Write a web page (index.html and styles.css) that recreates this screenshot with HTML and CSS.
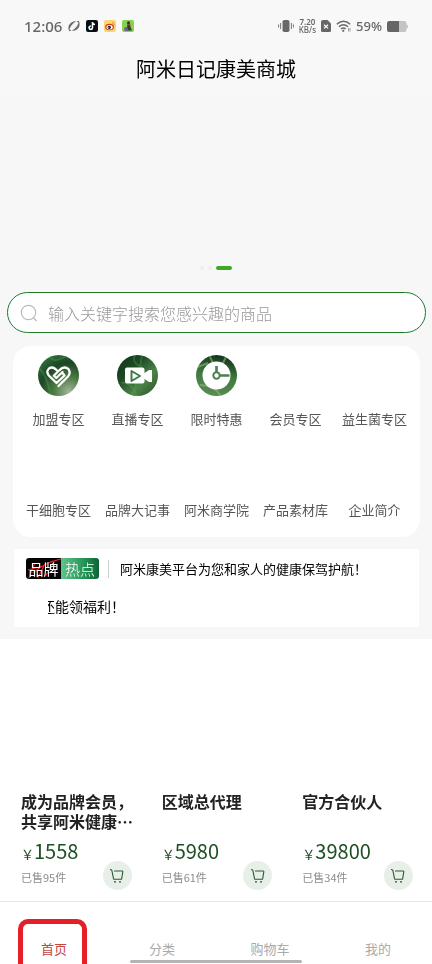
FILE: index.html
```html
<!DOCTYPE html>
<html lang="zh-CN">
<head>
<meta charset="utf-8">
<meta name="viewport" content="width=device-width, initial-scale=1">
<title>阿米日记康美商城</title>
<link rel="stylesheet" href="styles.css">
</head>
<body>
<svg class="defs" width="0" height="0" aria-hidden="true">
  <defs>
    <radialGradient id="leafA" cx="0.75" cy="0.9" r="0.95"><stop offset="0" stop-color="#a3b59c"/><stop offset="0.4" stop-color="#47793f"/><stop offset="0.75" stop-color="#1c4526"/><stop offset="1" stop-color="#2f6a38"/></radialGradient>
    <linearGradient id="leafB" x1="0" y1="0" x2="1" y2="1"><stop offset="0" stop-color="#123019"/><stop offset="0.35" stop-color="#1d4a25"/><stop offset="0.65" stop-color="#4c8447"/><stop offset="1" stop-color="#2a4d2c"/></linearGradient>
    <linearGradient id="leafC" x1="0.6" y1="0" x2="0.4" y2="1"><stop offset="0" stop-color="#11321b"/><stop offset="0.5" stop-color="#3f7a3e"/><stop offset="1" stop-color="#5c8c54"/></linearGradient>
    <clipPath id="disc"><circle cx="20.500" cy="20.500" r="20.500"/></clipPath>
    <symbol id="cart" viewBox="0 0 16 16">
      <path d="M1.500 1.500 2.800 2.200 4.600 11.200H12.600L13.800 3.800Q13.900 3 13 3H5.500" fill="none" stroke="#2d5a35" stroke-width="1.100" stroke-linecap="round" stroke-linejoin="round"/>
      <circle cx="6" cy="13.800" r="0.900" fill="#1d4a26"/><circle cx="11" cy="13.800" r="0.900" fill="#1d4a26"/>
    </symbol>
  </defs>
</svg>

<header class="top">
  <div class="status">
    <div class="status-group">
      <span class="clock">12:06</span>
      <svg class="app" viewBox="0 0 12 12"><path d="M.8 9.800C-1 4.500 4 .8 8.300 1.200 5.500 2.800 3 5 1.800 8.500ZM11.200 2.200C13 7.500 8 11.200 3.700 10.800 6.500 9.200 9 7 10.200 3.500Z" fill="#6e6e6e"/><path d="M.5 8.500 1.200 11.200 3.500 10.800ZM11.500 3.500 10.800 .8 8.500 1.200Z" fill="#6e6e6e"/></svg>
      <svg class="app" viewBox="0 0 12 12"><rect width="12" height="12" rx="2" fill="#0c0c10"/><path d="M6.600 2.200V7.800A1.700 1.700 0 1 1 4.900 6.100M6.600 2.400Q7 4.400 9 4.500" transform="translate(-.4 -.2)" fill="none" stroke="#39d7dc" stroke-width="1.300"/><path d="M6.600 2.200V7.800A1.700 1.700 0 1 1 4.900 6.100M6.600 2.400Q7 4.400 9 4.500" fill="none" stroke="#fff" stroke-width="1.300"/></svg>
      <svg class="app" viewBox="0 0 12 12"><rect width="12" height="12" rx="2" fill="#fbd772"/><ellipse cx="5.600" cy="7" rx="4.400" ry="3.200" fill="#d53a25"/><ellipse cx="5.600" cy="7.200" rx="3.100" ry="2.200" fill="#fff"/><circle cx="5.300" cy="7.300" r="1.600" fill="#111"/><circle cx="4.900" cy="7.600" r=".5" fill="#fff"/><path d="M8 2.200Q10.600 2 10.300 5M8.200 3.600Q9.200 3.600 9 4.800" fill="none" stroke="#ee8b2d" stroke-width=".8"/></svg>
      <svg class="app" viewBox="0 0 12 12"><rect width="12" height="12" rx="2" fill="#86d14e"/><circle cx="6.500" cy="2.700" r="1.500" fill="#2b2b2b"/><path d="M5.500 4H8L8.500 7 10 10.500H3.500L5 7.500Z" fill="#28402c"/><circle cx="4" cy="9" r="2" fill="#7a57a8"/><path d="M5.500 4.500 8.500 5" stroke="#d23f30" stroke-width="1"/></svg>
    </div>
    <div class="status-group">
      <svg class="vibrate" viewBox="0 0 16 12"><rect x="4.500" width="7" height="12" rx="1.800" fill="#686868"/><path d="M2.600 3V9M13.400 3V9M.6 4.500V7.500M15.400 4.500V7.500" stroke="#777" stroke-width="1"/></svg>
      <span class="speed"><b>7.20</b><span>KB/s</span></span>
      <svg class="sim" viewBox="0 0 10 12"><path d="M2 0H6.500L10 3.500V10.500Q10 12 8.500 12H1.500Q0 12 0 10.500V2Q0 0 2 0Z" fill="#666"/><path d="M3 4.800 7 8.400M7 4.800 3 8.400" stroke="#fff" stroke-width="1.200"/></svg>
      <svg class="wifi" viewBox="0 0 15 12"><path d="M.8 4.200Q7.500-1.800 14.200 4.200M3 6.700Q7.500 2.800 12 6.700M5 9Q7.500 7 9.600 9" fill="none" stroke="#696969" stroke-width="1.500"/><circle cx="7.300" cy="10.800" r="1.100" fill="#666"/><path d="M12.500 8V11.500M14 8V11.500" stroke="#888" stroke-width=".8"/></svg>
      <span class="percent">59%</span>
      <svg class="battery" viewBox="0 0 21 11"><path d="M2.500 0H17.500Q19.500 0 19.500 2V3.500L21 4.500V6.500L19.500 7.500V9Q19.500 11 17.500 11H2.500Q0 11 0 8.500V2.500Q0 0 2.500 0Z" fill="#c4c4c4"/><path d="M2.500 0H12V11H2.500Q0 11 0 8.500V2.500Q0 0 2.500 0Z" fill="#666"/></svg>
    </div>
  </div>
  <h1>阿米日记康美商城</h1>
</header>

<main>
  <section class="banner" aria-label="轮播图">
    <div class="dots"><i></i><i></i><i class="on"></i></div>
  </section>

  <form class="search">
    <svg viewBox="0 0 18 18" aria-hidden="true"><circle cx="8.500" cy="8.500" r="7.200" fill="none" stroke="#bbb" stroke-width="1.200"/><path d="M13.500 14 16.500 17" stroke="#bbb" stroke-width="1.400"/></svg>
    <input type="search" aria-label="搜索商品" placeholder="输入关键字搜索您感兴趣的商品">
  </form>

  <nav class="menu" aria-label="专区">
    <a href="#"><span class="pic"><svg viewBox="0 0 41 41"><g clip-path="url(#disc)"><rect width="41" height="41" fill="url(#leafA)"/><path d="M0 13Q8 17 13 41M12 0Q14 10 30 0" stroke="#4d9a50" stroke-width="2" fill="none" opacity=".4"/></g><path d="M18.500 28 10.800 20.500Q7.800 16.500 11 13.500 14.500 11 18 14.500L20 16.500 15.800 20.700 18.200 23 24.500 17M20 16.500 23 13.800Q27 11 30.500 14.200 33 18 30 21.500L20.500 31M18.500 28 26.500 20.500 24.500 18" fill="none" stroke="#fff" stroke-width="2.300" stroke-linecap="round" stroke-linejoin="round"/></svg></span>加盟专区</a>
    <a href="#"><span class="pic"><svg viewBox="0 0 41 41"><g clip-path="url(#disc)"><rect width="41" height="41" fill="url(#leafB)"/><path d="M15 41Q22 25 25 0M4 28Q14 26 20 41M18 0Q14 8 25 12" stroke="#62a65c" stroke-width="2" fill="none" opacity=".3"/></g><path d="M10 12.500H25.500Q27.500 12.500 27.500 14.500V18L32 15H35V27H32L27.500 24V26.500Q27.500 28.500 25.500 28.500H10Q8 28.500 8 26.500V14.500Q8 12.500 10 12.500Z" fill="#fff"/><path d="M14.500 16V26L23 21Z" fill="none" stroke="#3c7a46" stroke-width="2" stroke-linejoin="round"/></svg></span>直播专区</a>
    <a href="#"><span class="pic"><svg viewBox="0 0 41 41"><g clip-path="url(#disc)"><rect width="41" height="41" fill="url(#leafC)"/><path d="M13 0 17 8M31 0 26 10M2 12 12 8M4 30Q18 30 25 41" stroke="#8cba79" stroke-width="2" fill="none" opacity=".6"/></g><circle cx="20.500" cy="20.500" r="14" fill="#fff"/><path d="M20.500 11V17M24 20.500H33.500" stroke="#4e7f52" stroke-width="2.600"/><circle cx="20.500" cy="20.500" r="3.200" fill="none" stroke="#4e7f52" stroke-width="2"/></svg></span>限时特惠</a>
    <a href="#"><span class="pic"></span>会员专区</a>
    <a href="#"><span class="pic"></span>益生菌专区</a>
    <a href="#"><span class="pic"></span>干细胞专区</a>
    <a href="#"><span class="pic"></span>品牌大记事</a>
    <a href="#"><span class="pic"></span>阿米商学院</a>
    <a href="#"><span class="pic"></span>产品素材库</a>
    <a href="#"><span class="pic"></span>企业简介</a>
  </nav>

  <section class="news">
    <div class="news-row">
      <span class="badge"><span class="brand">品牌<svg viewBox="0 0 36 21" preserveAspectRatio="none" aria-hidden="true"><path d="M3 20 9 5M7 15Q20 4 36 1M2 12 18 8M12 20 20 5M20 18 29 4" stroke="#ed2920" stroke-width="1.200" fill="none"/></svg></span><span class="hot">热点</span></span>
      <p>阿米康美平台为您和家人的健康保驾护航！</p>
    </div>
    <div class="ticker"><p>还能领福利！</p></div>
  </section>

  <section class="goods">
    <article>
      <h2>成为品牌会员，<br>共享阿米健康…</h2>
      <div class="price"><small>￥</small>1558</div>
      <div class="sold">已售95件</div>
      <button class="add" type="button" aria-label="加入购物车"><svg><use href="#cart"/></svg></button>
    </article>
    <article>
      <h2>区域总代理</h2>
      <div class="price"><small>￥</small>5980</div>
      <div class="sold">已售61件</div>
      <button class="add" type="button" aria-label="加入购物车"><svg><use href="#cart"/></svg></button>
    </article>
    <article>
      <h2>官方合伙人</h2>
      <div class="price"><small>￥</small>39800</div>
      <div class="sold">已售34件</div>
      <button class="add" type="button" aria-label="加入购物车"><svg><use href="#cart"/></svg></button>
    </article>
  </section>
</main>

<nav class="tabs" aria-label="底部导航">
  <a class="current" href="#">首页</a>
  <a href="#">分类</a>
  <a href="#">购物车</a>
  <a href="#">我的</a>
  <span class="home-bar"></span>
</nav>
</body>
</html>
```

FILE: styles.css
```css
*, *::before { box-sizing: border-box; }
body {
  margin: 0;
  min-height: 100vh;
  display: flex;
  flex-direction: column;
  background: #fff;
  color: #111;
  font-family: "Noto Sans CJK SC", sans-serif;
}
h1, h2, p { margin: 0; font-weight: 400; }
a { color: inherit; text-decoration: none; }
svg { display: block; flex: none; }
.defs { position: absolute; }

.top { background: #f8f8f8; padding: 14px 24px 12px; }
.status {
  display: flex;
  justify-content: space-between;
  height: 24px;
  color: #666;
  font-family: "Noto Sans", sans-serif;
}
.status-group { display: flex; align-items: center; gap: 6px; }
.clock { font-size: 15px; font-weight: 500; }
.app { width: 12px; height: 12px; }
.status-group:last-child { gap: 5px; }
.vibrate { width: 16px; height: 12px; }
.speed { display: flex; flex-direction: column; align-items: center; font-size: 8px; line-height: 8px; font-weight: 500; }
.speed b { font-weight: 600; }
.sim { width: 10px; height: 12px; }
.wifi { width: 15px; height: 12px; }
.percent { font-size: 13px; font-weight: 500; }
.battery { width: 21px; height: 11px; }
h1 { margin-top: 16px; text-align: center; font-size: 20px; line-height: 30px; color: #000; }

main { flex: 1; background: linear-gradient(#f7f7f7, #f7f7f7) top / 100% 543px no-repeat; }
.banner { height: 196px; display: flex; align-items: flex-end; justify-content: center; padding-bottom: 22px; }
.dots { display: flex; align-items: center; gap: 4px; }
.dots i { width: 4px; height: 4px; border-radius: 2px; background: #ececec; }
.dots .on { width: 16px; background: #3fa829; }

.search {
  display: flex;
  align-items: center;
  gap: 10px;
  height: 41px;
  margin: 0 6px 0 7px;
  padding: 0 12px;
  border: 1px solid #1f7a28;
  border-radius: 21px;
  background: #fff;
}
.search svg { width: 18px; height: 18px; }
.search input {
  flex: 1;
  min-width: 0;
  padding: 0;
  border: 0;
  outline: 0;
  background: none;
  font: 16px/24px "Noto Sans CJK SC", sans-serif;
}
.search input::placeholder { color: #999; font-weight: 300; opacity: 1; }

.menu {
  display: grid;
  grid-template-columns: repeat(5, 1fr);
  row-gap: 17px;
  margin: 13px 12px 12px 13px;
  padding: 9px 6px 17px;
  border-radius: 18px;
  background: #fff;
}
.menu a {
  display: flex;
  flex-direction: column;
  align-items: center;
  gap: 13px;
  font-size: 13px;
  line-height: 20px;
  color: #555;
  white-space: nowrap;
}
.pic { width: 41px; height: 41px; }

.news { margin: 0 13px 0 14px; padding: 9px 12px; background: #fff; border-radius: 2px; height: 78px; }
.news-row { display: flex; align-items: center; height: 21px; }
.news-row p {
  margin-left: 9px;
  padding-left: 11px;
  border-left: 1px solid #ccc;
  font-size: 13px;
  line-height: 18px;
  color: #000;
  white-space: nowrap;
}
.badge {
  display: grid;
  grid-template-columns: 35px 38px;
  border-radius: 3px;
  overflow: hidden;
  color: #fff;
  font-size: 15px;
  line-height: 21px;
  text-align: center;
}
.brand { position: relative; background: #050505; }
.brand svg { position: absolute; inset: 0; width: 100%; height: 100%; mix-blend-mode: lighten; }
.hot { background: linear-gradient(90deg, #5fc48b, #259657 60%, #0c6337); font-weight: 300; }
.ticker { display: flex; justify-content: flex-end; overflow: hidden; width: 77px; margin: 16px 0 0 22px; }
.ticker p { font-size: 14px; line-height: 22px; color: #000; white-space: nowrap; }

.goods { display: grid; grid-template-columns: repeat(3, 1fr); gap: 30px; padding: 164px 19px 10px 21px; }
.goods article { display: grid; grid-template-columns: 1fr auto; align-content: start; }
.goods h2 {
  grid-column: 1 / 3;
  min-height: 40px;
  font-size: 16px;
  line-height: 20px;
  font-weight: 700;
  color: #222;
  white-space: nowrap;
}
.price { grid-column: 1 / 3; margin-top: 5px; font-size: 20px; line-height: 30px; color: #1f5024; }
.price small { font-size: 13px; }
.sold { font-size: 11px; line-height: 16px; color: #8c8c8c; white-space: nowrap; }
.add {
  display: grid;
  place-items: center;
  width: 29px;
  height: 29px;
  margin-top: -8px;
  padding: 0;
  border: 0;
  border-radius: 50%;
  background: #e7efe8;
}
.add svg { width: 16px; height: 16px; }

.tabs {
  position: relative;
  display: grid;
  grid-template-columns: repeat(4, 1fr);
  height: 63px;
  padding-top: 37px;
  border-top: 1px solid #e6e6e6;
  background: #fff;
  color: #aaa;
  font-size: 13px;
  line-height: 20px;
  text-align: center;
}
.tabs .current { color: #c0443f; }
.tabs .current::before {
  content: "";
  position: absolute;
  top: 17px;
  bottom: 0;
  left: 18px;
  width: 69px;
  border: 5px solid #e51f27;
  border-bottom: 0;
  border-radius: 10px 10px 0 0;
}
.home-bar {
  position: absolute;
  left: 30%;
  right: 30%;
  bottom: 1px;
  height: 3px;
  border-radius: 2px;
  background: #b3b3b3;
}
```
